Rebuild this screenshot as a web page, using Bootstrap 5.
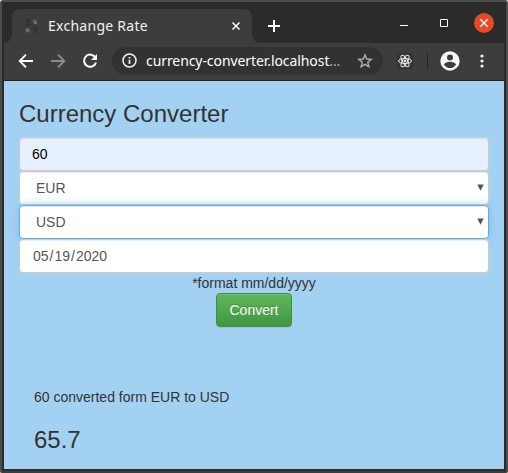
<!DOCTYPE html>
<html lang="en">
<head>
<meta charset="utf-8">
<meta name="viewport" content="width=device-width, initial-scale=1">
<title>Exchange Rate</title>
<link href="https://cdn.jsdelivr.net/npm/bootstrap@5.3.0/dist/css/bootstrap.min.css" rel="stylesheet">
<style>
html, body { height: 100%; overflow: hidden; background: #fff; }
body { font-family: "Liberation Sans", Arial, sans-serif; font-size: 14px; line-height: 20px; color: #333; }
.window-frame { width: 508px; height: 473px; border: 2px solid #4d4d4b; border-bottom-color: #3d3d3b; border-radius: 3px 3px 2px 2px; background: #2b2b2b; padding: 0 2px 2px; }
.title-bar { height: 41px; background: #2b2b2b; font-family: "Noto Sans", sans-serif; }
.tab-item { position: relative; width: 240px; height: 34px; margin: 7px 0 0 8px; padding: 0 11px 0 12px; background: #3d3d3d; border-radius: 8px 8px 0 0; color: #f1f1f1; }
.tab-item::before, .tab-item::after { content: ""; position: absolute; bottom: 0; width: 8px; height: 8px; }
.tab-item::before { left: -8px; background: radial-gradient(circle at 0 0, #2b2b2b 7.5px, #3d3d3d 8px); }
.tab-item::after { right: -8px; background: radial-gradient(circle at 100% 0, #2b2b2b 7.5px, #3d3d3d 8px); }
.tab-title { font-size: 14px; letter-spacing: .27px; margin-left: 8px; white-space: nowrap; }
.new-tab { margin: 17px 0 0 15px; }
.win-controls { margin: 11px 10px 0 auto; gap: 20px; }
.tool-bar { height: 38px; background: #3d3d3d; border-bottom: 1px solid #222; padding: 0 0 2px 14px; }
.omnibox { width: 271px; height: 28px; margin-left: 14px; padding: 0 10px 0 10px; border-radius: 14px; background: #323232; color: #fff; font-family: "Noto Sans", sans-serif; }
.url-text { font-size: 14px; margin-left: 9px; white-space: nowrap; letter-spacing: -.08px; }
.url-more { color: #aaa; }
.ext-icon { margin-left: 14px; }
.menu-dots { margin-left: 20px; }
.tool-sep { width: 1px; height: 16px; background: #222; margin: 0 12px 0 14px; }
.page-area { height: 388px; background: #a3d1f2; padding: 20px 15px 0; }
.page-heading { font-size: 24px; line-height: 26px; font-weight: 400; margin: 0 0 10px; color: #333; }
.page-area .form-control { height: 34px; padding: 6px 12px; font-size: 14px; line-height: 20px; color: #555; background: #fff; border: 1px solid #ccc; border-radius: 4px; box-shadow: inset 0 1px 1px rgba(0,0,0,.075); }
.page-area .filled { background: #e6f0fc; color: #000; }
.page-area .pick { padding: 5px 4px 7px 16px; }
.page-area .pick span { position: relative; top: 1px; }
.page-area .picked { position: relative; border-color: #54aeea; box-shadow: inset 0 1px 1px rgba(0,0,0,.075), 0 0 8px rgba(102,175,233,.6); }
.page-area .date-box { position: relative; padding-left: 13px; }
.date-box i { font-style: normal; padding: 0 1px; }
.btn-convert { height: 34px; padding: 6px 12px; font-size: 14px; line-height: 20px; border-radius: 4px; color: #fff; border: 1px solid #3e8f3e; background: linear-gradient(#5cb85c, #419641); text-shadow: 0 -1px 0 rgba(0,0,0,.2); box-shadow: inset 0 1px 0 rgba(255,255,255,.15), 0 1px 1px rgba(0,0,0,.075); }
.result-box { padding: 60px 15px 0; }
.result-box p { margin: 0 0 20px; }
.result-value { font-size: 24px; line-height: 26px; font-weight: 400; color: #333; }
svg { display: block; flex: none; }
</style>
</head>
<body>
<div class="window-frame">
  <header>
    <div class="title-bar d-flex align-items-start">
      <div class="tab-item d-flex align-items-center">
        <svg width="16" height="16" viewBox="0 0 16 16" fill="none" stroke-width="1.2">
          <path d="M6 2.500C5 1.200 2 1.200 2 3s4 1.200 4 3-3 2-4.200.500M4 .500v8M9 8l2.500 3.200L14 8M11.500 11v4M9.500 12h4M9.500 13.800h4" stroke="#2b3134"/>
          <path d="M9 2l3.500 3.500M9.300 5.200l3-3M2.500 14l3-3M3 11l3 3.500" stroke="#5c7078"/>
          <path d="M13 2.500V6H9.500zM1.800 14v-3.500h3.500z" fill="#62777f"/>
        </svg>
        <span class="tab-title">Exchange Rate</span>
        <svg class="ms-auto" width="10" height="10" viewBox="0 0 10 10" stroke="#f5f5f5" stroke-width="1.6"><path d="M1.500 1.500l7 7M8.500 1.500l-7 7"/></svg>
      </div>
      <svg class="new-tab" width="14" height="14" viewBox="0 0 14 14" stroke="#fff" stroke-width="2"><path d="M7 1v12M1 7h12"/></svg>
      <div class="win-controls d-flex align-items-center">
        <svg width="20" height="20" viewBox="0 0 20 20" stroke="#fff"><path d="M6 12.500h8"/></svg>
        <svg width="20" height="20" viewBox="0 0 20 20" stroke="#fff" fill="none"><path d="M6.500 6.500h7v7h-7z"/></svg>
        <svg width="20" height="20" viewBox="0 0 20 20" stroke="#fff" stroke-width="1.300"><circle cx="10" cy="10" r="10" fill="#e34b27" stroke="none"/><path d="M6.300 6.300l7.400 7.400M13.700 6.300l-7.400 7.400"/></svg>
      </div>
    </div>
    <div class="tool-bar d-flex align-items-center">
      <svg width="16" height="16" viewBox="0 0 16 16" fill="none" stroke="#fff" stroke-width="1.900"><path d="M15 8H2M8 1.700L1.700 8 8 14.300"/></svg>
      <svg width="16" height="16" viewBox="0 0 16 16" fill="none" stroke="#8b8b8b" stroke-width="1.900" class="ms-3"><path d="M1 8h13M8 1.700L14.300 8 8 14.300"/></svg>
      <svg width="16" height="16" viewBox="0 0 16 16" fill="none" stroke="#fff" stroke-width="2" class="ms-3"><path d="M13.400 4.600A6.100 6.100 0 1 0 14 9.500"/><path d="M15 1v6H9z" fill="#fff" stroke="none"/></svg>
      <div class="omnibox d-flex align-items-center">
        <svg width="15" height="15" viewBox="0 0 15 15" fill="none" stroke="#f1f1f1" stroke-width="1.500"><circle cx="7.500" cy="7.500" r="6.500"/><path d="M7.500 6.700V11M7.500 4v1.600" stroke-width="1.700"/></svg>
        <span class="url-text">currency-converter.localhost<span class="url-more">…</span></span>
        <svg class="ms-auto" width="16" height="16" viewBox="0 0 16 16" fill="none" stroke="#b0b0b0" stroke-width="1.400"><path d="M8 1.900l1.750 4.100 4.450.400-3.400 2.900 1.050 4.350L8 11.300l-3.850 2.350L5.200 9.300 1.800 6.400l4.450-.400z"/></svg>
      </div>
      <svg class="ext-icon" width="16" height="16" viewBox="0 0 16 16" fill="none" stroke="#eee"><rect width="16" height="16" fill="#333" stroke="none"/><ellipse cx="8" cy="8" rx="6.500" ry="2.500"/><ellipse cx="8" cy="8" rx="6.500" ry="2.500" transform="rotate(60 8 8)"/><ellipse cx="8" cy="8" rx="6.500" ry="2.500" transform="rotate(120 8 8)"/><circle cx="8" cy="8" r="1" fill="#eee"/></svg>
      <span class="tool-sep"></span>
      <svg width="20" height="20" viewBox="0 0 20 20"><circle cx="10" cy="10" r="9.700" fill="#f7f7f7"/><circle cx="10" cy="6.400" r="3" fill="#3d3d3d"/><path d="M4 13.800c0-2 4-3.100 6-3.100s6 1.100 6 3.100a7.200 7.200 0 0 1-12 0z" fill="#3d3d3d"/></svg>
      <svg class="menu-dots" width="4" height="14" viewBox="0 0 4 14" fill="#f5f5f5"><circle cx="2" cy="2" r="1.600"/><circle cx="2" cy="7" r="1.600"/><circle cx="2" cy="12" r="1.600"/></svg>
    </div>
  </header>
  <main class="page-area">
    <h1 class="page-heading">Currency Converter</h1>
    <div class="form-control filled">60</div>
    <div class="form-control pick d-flex align-items-center justify-content-between"><span>EUR</span>
      <svg width="7" height="7" viewBox="0 0 7 7" fill="#555"><path d="M.300.500h6.400L3.500 6.700z"/></svg></div>
    <div class="form-control pick picked d-flex align-items-center justify-content-between"><span>USD</span>
      <svg width="7" height="7" viewBox="0 0 7 7" fill="#555"><path d="M.300.500h6.400L3.500 6.700z"/></svg></div>
    <div class="form-control date-box">05<i>/</i>19<i>/</i>2020</div>
    <div class="text-center">*format mm/dd/yyyy</div>
    <div class="text-center"><button type="button" class="btn btn-convert d-block mx-auto">Convert</button></div>
    <div class="result-box">
      <p>60 converted form EUR to USD</p>
      <div class="result-value">65.7</div>
    </div>
  </main>
</div>
<script src="https://cdn.jsdelivr.net/npm/bootstrap@5.3.0/dist/js/bootstrap.bundle.min.js"></script>
</body>
</html>
